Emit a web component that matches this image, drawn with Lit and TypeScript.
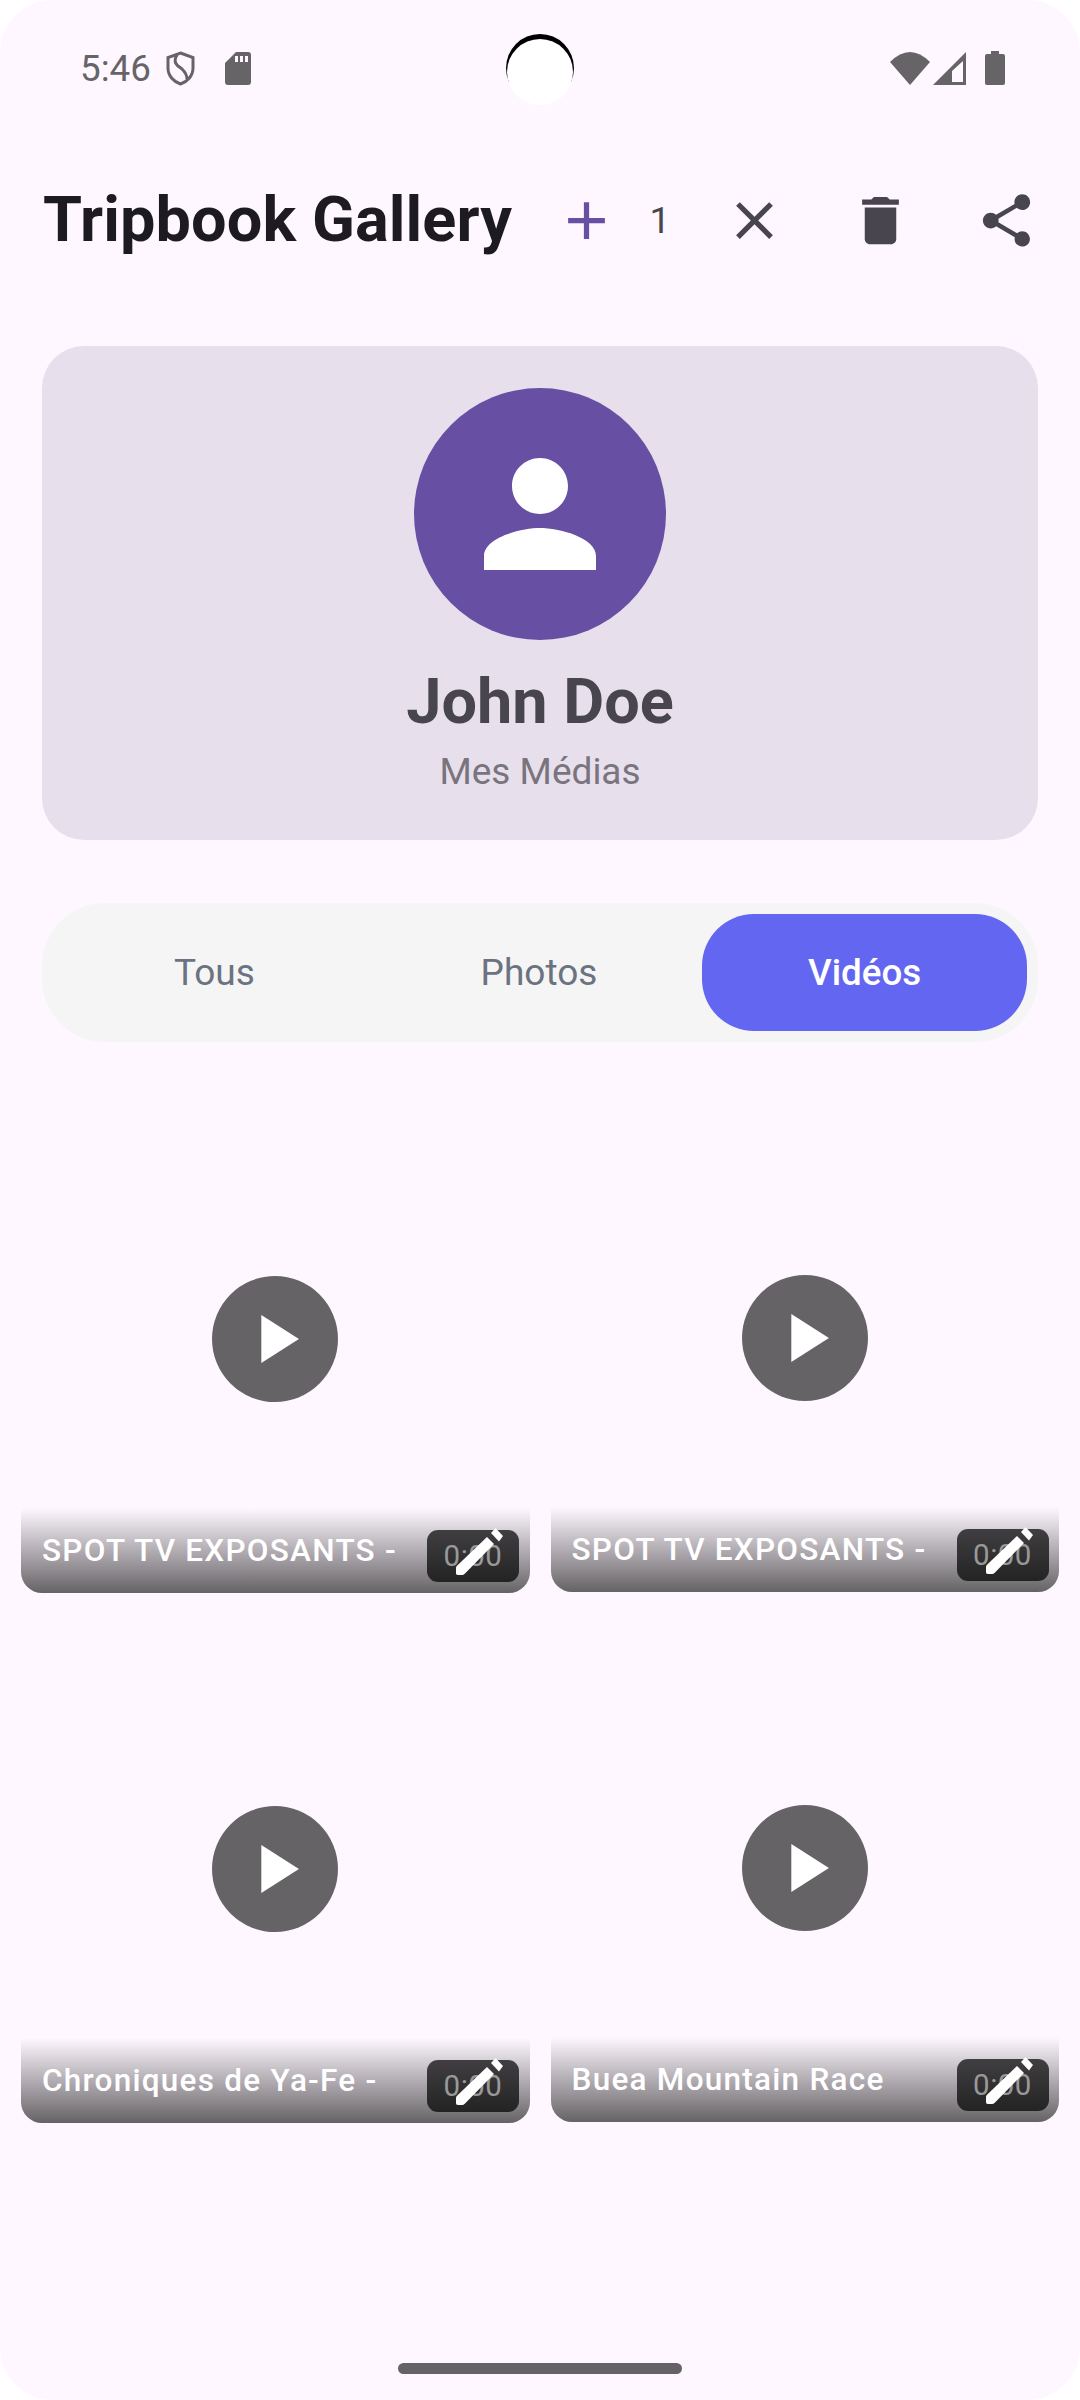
import { LitElement, html, css, svg } from "lit";
import { customElement } from "lit/decorators.js";

const videos = [
  [
    { title: "SPOT TV EXPOSANTS -" },
    { title: "Chroniques de Ya-Fe -" },
  ],
  [
    { title: "SPOT TV EXPOSANTS -" },
    { title: "Buea Mountain Race" },
  ],
];

const icon = (d: unknown, cls = "") =>
  html`<svg class="mi ${cls}" viewBox="0 0 24 24">${d}</svg>`;

const ADD = svg`<path d="M19 13h-6v6h-2v-6H5v-2h6V5h2v6h6v2z" />`;
const CLOSE = svg`<path d="M19 6.41L17.59 5 12 10.59 6.41 5 5 6.41 10.59 12 5 17.59 6.41 19 12 13.41 17.59 19 19 17.59 13.41 12z" />`;
const TRASH = svg`<path d="M6 19c0 1.1.9 2 2 2h8c1.1 0 2-.9 2-2V7H6v12zM19 4h-3.5l-1-1h-5l-1 1H5v2h14V4z" />`;
const SHARE = svg`<path d="M18 16.08c-.76 0-1.44.3-1.96.77L8.91 12.7c.05-.23.09-.46.09-.7s-.04-.47-.09-.7l7.05-4.11c.54.5 1.25.81 2.04.81 1.66 0 3-1.34 3-3s-1.34-3-3-3-3 1.34-3 3c0 .24.04.47.09.7L8.04 9.81C7.5 9.31 6.79 9 6 9c-1.66 0-3 1.34-3 3s1.34 3 3 3c.79 0 1.5-.31 2.04-.81l7.12 4.16c-.05.21-.08.43-.08.65 0 1.61 1.31 2.92 2.92 2.92 1.61 0 2.92-1.31 2.92-2.92s-1.31-2.92-2.92-2.92z" />`;
const PERSON = svg`<path d="M12 12c2.21 0 4-1.79 4-4s-1.79-4-4-4-4 1.79-4 4 1.79 4 4 4zm0 2c-2.67 0-8 1.34-8 4v2h16v-2c0-2.66-5.33-4-8-4z" />`;
const PLAY = svg`<path d="M8 5v14l11-7z" />`;

@customElement("app-root")
export class AppRoot extends LitElement {
  static styles = css`
    :host {
      display: block;
      width: 1080px;
      height: 2400px;
      background: #fff;
      font-family: Roboto, "Noto Sans", sans-serif;
    }

    * {
      box-sizing: border-box;
    }

    .screen {
      position: relative;
      display: flex;
      flex-direction: column;
      width: 1080px;
      height: 2400px;
      background: #fef7ff;
      border-radius: 52px;
      overflow: hidden;
    }

    .mi {
      display: block;
      width: 63px;
      height: 63px;
      fill: #49454f;
    }

    /* status bar */
    .status {
      display: flex;
      align-items: center;
      height: 136px;
      padding: 0 75px 0 80px;
      color: #666467;
      fill: #666467;
    }
    .time {
      width: 86px;
      padding-top: 1px;
      font-size: 36.75px;
      line-height: 40px;
    }
    .shield {
      width: 29px;
      height: 35px;
      margin-right: 30px;
    }
    .sd {
      width: 26px;
      height: 33px;
    }
    .spacer {
      flex: 1;
    }
    .wifi {
      width: 40px;
      height: 33px;
      margin-right: 3px;
    }
    .signal {
      width: 33px;
      height: 33px;
      margin-right: 19px;
    }
    .battery {
      width: 20px;
      height: 34px;
    }

    .camera {
      position: absolute;
      top: 34px;
      left: 506px;
      width: 68px;
      height: 72px;
    }

    /* toolbar */
    .toolbar {
      display: flex;
      align-items: center;
      height: 126px;
      margin-top: 21px;
      padding: 0 10.5px 0 43px;
    }
    .title {
      flex: 1;
      margin: 0 0 2px;
      font-size: 63px;
      font-weight: 700;
      letter-spacing: 0.1px;
      color: #1d1b20;
      white-space: nowrap;
    }
    .icon-btn {
      display: flex;
      align-items: center;
      justify-content: center;
      width: 126px;
      height: 126px;
    }
    .add {
      fill: #6750a4;
    }
    .count {
      width: 21px;
      margin-right: 21px;
      text-align: center;
      font-size: 37px;
      color: #49454f;
    }

    /* profile card */
    .profile {
      display: flex;
      flex-direction: column;
      align-items: center;
      height: 494px;
      margin: 63px 42px 0;
      padding-top: 42px;
      background: #e7e0ec;
      border-radius: 42px;
    }
    .avatar {
      display: flex;
      align-items: center;
      justify-content: center;
      width: 252px;
      height: 252px;
      border-radius: 50%;
      background: #6750a4;
    }
    .avatar .mi {
      width: 168px;
      height: 168px;
      fill: #fff;
    }
    .name {
      margin-top: 25px;
      font-size: 63px;
      line-height: 74px;
      font-weight: 700;
      color: #49454f;
    }
    .sub {
      margin-top: 9px;
      font-size: 37px;
      line-height: 48px;
      color: #79747e;
    }

    /* tabs */
    .tabs {
      display: grid;
      grid-template-columns: repeat(3, 1fr);
      height: 139px;
      margin: 63px 42px 0;
      padding: 11px;
      background: #f5f5f5;
      border-radius: 63px;
    }
    .tab {
      display: flex;
      align-items: center;
      justify-content: center;
      padding-right: 2px;
      border-radius: 52px;
      font-size: 37px;
      color: #6b7280;
    }
    .tab.on {
      padding-right: 0;
      background: #6366f1;
      color: #fff;
      font-size: 36.75px;
      font-weight: 500;
    }

    /* video grid */
    .grid {
      display: flex;
      gap: 21px;
      margin-top: 42px;
      padding-left: 21px;
    }
    .col {
      display: flex;
      flex-direction: column;
      gap: 21px;
      width: 508.5px;
    }
    .col.up {
      margin-top: -1px;
    }
    .tile {
      display: grid;
      height: 509px;
      border-radius: 21px;
      overflow: hidden;
    }
    .tile > * {
      grid-area: 1 / 1;
    }
    .play {
      place-self: center;
      display: flex;
      align-items: center;
      justify-content: center;
      width: 126px;
      height: 126px;
      border-radius: 50%;
      background: rgba(0, 0, 0, 0.6);
    }
    .play .mi {
      width: 82px;
      height: 82px;
      fill: #fff;
    }
    .caption {
      align-self: end;
      display: flex;
      align-items: center;
      justify-content: space-between;
      height: 85px;
      padding: 22px 10.5px 11px 21px;
      background: linear-gradient(rgba(0, 0, 0, 0), rgba(0, 0, 0, 0.6));
    }
    .name-video {
      margin-bottom: 12px;
      font-size: 31.5px;
      font-weight: 500;
      letter-spacing: 1.25px;
      color: #fff;
      white-space: nowrap;
    }
    .badge {
      position: relative;
      display: flex;
      align-items: center;
      justify-content: center;
      width: 92px;
      height: 52px;
      border-radius: 11px;
      background: rgba(0, 0, 0, 0.7);
      font-size: 29.5px;
      letter-spacing: 0.5px;
      color: #999;
    }
    .pencil {
      position: absolute;
      top: -6px;
      left: 24px;
      width: 56px;
      height: 56px;
      fill: #fff;
    }

    .home {
      position: absolute;
      left: 398px;
      top: 2363px;
      width: 284px;
      height: 11px;
      border-radius: 6px;
      background: #656366;
    }
  `;

  renderTile(title: string) {
    return html`
      <div class="tile">
        <div class="play">${icon(PLAY)}</div>
        <div class="caption">
          <span class="name-video">${title}</span>
          <span class="badge">
            0:00
            <svg class="pencil" viewBox="0 0 56 56">
              <path d="M36 13l7 7-29 29.500c-1 1-2 1.500-3 1.500h-4c-1.500 0-2-1-2-2v-5c0-1 .3-1.600 1-2.300z" />
              <path d="M44.500 4l7.500 8-4 5.500-8-8.500z" />
            </svg>
          </span>
        </div>
      </div>
    `;
  }

  render() {
    return html`
      <div class="screen">
        <div class="status">
          <span class="time">5:46</span>
          <svg class="shield" viewBox="0 0 29 35">
            <path
              d="M14.500 2L27 6.500V17c0 8-6 14-12.500 16C8 31 2 25 2 17V6.500z M11 4c-5 8 1 11 5 14 3 3 5 7 5 10"
              fill="none"
              stroke="#666467"
              stroke-width="3"
            />
          </svg>
          <svg class="sd" viewBox="0 0 26 33">
            <path
              fill-rule="evenodd"
              d="M11 0h12a3 3 0 0 1 3 3v27a3 3 0 0 1-3 3H3a3 3 0 0 1-3-3V11zM10 4v6h3V4zm5 0v6h3V4zm5 0v6h3V4z"
            />
          </svg>
          <span class="spacer"></span>
          <svg class="wifi" viewBox="0 0 40 33"><path d="M20 33L0 10Q20-10 40 10z" /></svg>
          <svg class="signal" viewBox="0 0 33 33">
            <path fill-rule="evenodd" d="M0 33L33 0v33zM30 9L19 19v11h11z" />
          </svg>
          <svg class="battery" viewBox="0 0 20 34">
            <path d="M6 0h8v3h4a2 2 0 0 1 2 2v27a2 2 0 0 1-2 2H2a2 2 0 0 1-2-2V5a2 2 0 0 1 2-2h4z" />
          </svg>
        </div>
        <svg class="camera" viewBox="0 0 68 72">
          <circle cx="34" cy="34" r="34" fill="#000" />
          <circle cx="34" cy="38" r="33" fill="#fff" />
        </svg>

        <div class="toolbar">
          <h1 class="title">Tripbook Gallery</h1>
          <div class="icon-btn">${icon(ADD, "add")}</div>
          <span class="count">1</span>
          <div class="icon-btn">${icon(CLOSE)}</div>
          <div class="icon-btn">${icon(TRASH)}</div>
          <div class="icon-btn">${icon(SHARE)}</div>
        </div>

        <div class="profile">
          <div class="avatar">${icon(PERSON)}</div>
          <div class="name">John Doe</div>
          <div class="sub">Mes Médias</div>
        </div>

        <div class="tabs">
          <div class="tab">Tous</div>
          <div class="tab">Photos</div>
          <div class="tab on">Vidéos</div>
        </div>

        <div class="grid">
          ${videos.map(
            (col, i) => html`
              <div class="col ${i === 1 ? "up" : ""}">
                ${col.map((v) => this.renderTile(v.title))}
              </div>
            `
          )}
        </div>

        <div class="home"></div>
      </div>
    `;
  }
}
